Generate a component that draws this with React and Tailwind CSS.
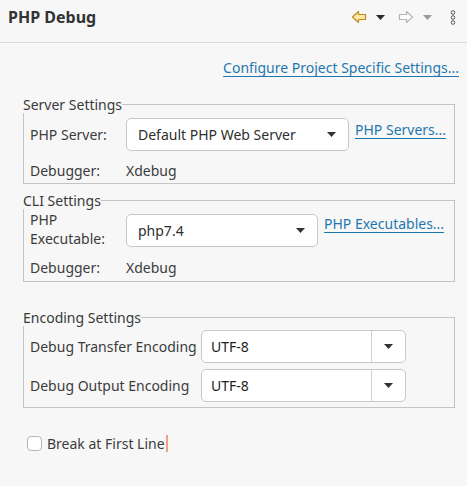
import React from 'react';

const font = { fontFamily: '"Noto Sans", "DejaVu Sans", sans-serif' };

const Arrow = ({ dir, fill, stroke }) => (
    <svg width="16" height="14" viewBox="0 0 16 14" className={dir === 'right' ? '-scale-x-100' : ''}>
        <path d="M1.5 7 L7.5 1.5 V4.5 H14.5 V9.5 H7.5 V12.5 Z" fill={fill} stroke={stroke} strokeWidth="1.2" strokeLinejoin="round" />
    </svg>
);

const Caret = ({ color = '#333' }) => (
    <svg width="9" height="5" viewBox="0 0 9 5">
        <polygon points="0,0 9,0 4.5,5" fill={color} />
    </svg>
);

const Select = ({ value, className = '' }) => (
    <div className={`flex items-center justify-between h-[33px] bg-white border border-[#c8c8c8] rounded-[5px] pl-[11px] pr-[12px] text-[#2e2e2e] ${className}`}>
        <span>{value}</span>
        <Caret />
    </div>
);

const Combo = ({ value }) => (
    <div className="flex h-[33px] w-[205px] bg-white border border-[#c8c8c8] rounded-[5px] text-[#1e1e1e]">
        <div className="flex-1 flex items-center pl-[9px] border-r border-[#d0d0d0]">{value}</div>
        <div className="w-[33px] flex items-center justify-center"><Caret /></div>
    </div>
);

const Link = ({ children }) => (
    <a className="text-[#1f77b0] underline decoration-1 underline-offset-[3px] cursor-pointer">{children}</a>
);

const Group = ({ title, children, className = '' }) => (
    <fieldset className={`mx-[12px] ml-[23px] border border-[#c4c4c4] px-[6px] ${className}`}>
        <legend className="px-0 -ml-[7px] leading-[17px] text-[#3a3a3a]">{title}</legend>
        {children}
    </fieldset>
);

export default function App() {
    return (
        <div className="w-[467px] h-[486px] bg-[#f7f7f7] text-[14px] text-[#3c3c3c]" style={font}>
            {/* Header */}
            <div className="h-[43px] flex items-center justify-between border-b border-[#d9d9d9] pl-[8px] pr-[11px]">
                <h1 className="text-[16px] font-bold text-[#333] -mt-[8px]">PHP Debug</h1>
                <div className="flex items-center -mt-[8px]">
                    <Arrow fill="#fde8a6" stroke="#c28b1c" />
                    <span className="ml-[9px]"><Caret color="#2a2a2a" /></span>
                    <span className="ml-[13px]"><Arrow dir="right" fill="#ffffff" stroke="#b5b5b5" /></span>
                    <span className="ml-[9px]"><Caret color="#9a9a9a" /></span>
                    <svg width="6" height="15" viewBox="0 0 6 15" className="ml-[18px]">
                        <circle cx="3" cy="2.5" r="1.8" fill="none" stroke="#555" strokeWidth="1" />
                        <circle cx="3" cy="7.5" r="1.8" fill="none" stroke="#555" strokeWidth="1" />
                        <circle cx="3" cy="12.5" r="1.8" fill="none" stroke="#555" strokeWidth="1" />
                    </svg>
                </div>
            </div>

            <div className="flex justify-end pr-[8px] pt-[15px] leading-[20px]">
                <Link>Configure Project Specific Settings...</Link>
            </div>

            <Group title="Server Settings" className="mt-[18px] pb-[2px]">
                <div className="grid grid-cols-[96px_223px_auto] items-center mt-[5px]">
                    <span>PHP Server:</span>
                    <Select value="Default PHP Web Server" />
                    <span className="ml-[6px] self-start mt-[1px]"><Link>PHP Servers...</Link></span>
                    <span className="mt-[9px]">Debugger:</span>
                    <span className="mt-[9px]">Xdebug</span>
                </div>
            </Group>

            <Group title="CLI Settings" className="mt-[8px] pb-[3px]">
                <div className="grid grid-cols-[96px_192px_auto] items-center mt-[3px]">
                    <div className="flex flex-col leading-[16px]">
                        <span>PHP</span>
                        <span className="mt-[3px]">Executable:</span>
                    </div>
                    <Select value="php7.4" className="self-end" />
                    <span className="ml-[6px] self-start mt-[1px]"><Link>PHP Executables...</Link></span>
                    <span className="mt-[10px]">Debugger:</span>
                    <span className="mt-[10px]">Xdebug</span>
                </div>
            </Group>

            <Group title="Encoding Settings" className="mt-[27px] pb-[5px]">
                <div className="grid grid-cols-[171px_auto] items-center gap-y-[6px] mt-[4px]">
                    <span>Debug Transfer Encoding</span>
                    <Combo value="UTF-8" />
                    <span>Debug Output Encoding</span>
                    <Combo value="UTF-8" />
                </div>
            </Group>

            <div className="flex items-center ml-[27px] mt-[25px]">
                <span className="w-[15px] h-[15px] bg-white border border-[#b5b5b5] rounded-[4px]" />
                <span className="ml-[5px]">Break at First Line</span>
                <span className="ml-[1px] w-[2px] h-[17px] bg-[#f2a184]" />
            </div>
        </div>
    );
}
